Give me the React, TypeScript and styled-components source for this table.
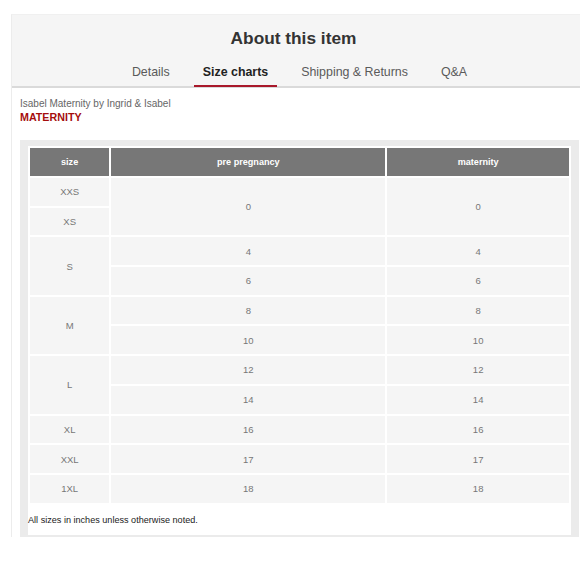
import React from 'react';
import styled, { createGlobalStyle } from 'styled-components';

const GlobalStyle = createGlobalStyle`
  html, body {
    margin: 0;
    padding: 0;
    background: #fff;
    overflow: hidden;
  }
  body {
    font-family: 'Liberation Sans', Arial, Helvetica, sans-serif;
  }
`;

const Page = styled.div`
  width: 575px;
  margin: 14px 0 0 11px;
  border-left: 1px solid #ececec;
  border-top: 1px solid #f0f0f0;
`;

const Header = styled.header`
  background: #f5f5f5;
  padding-top: 11px;
  border-bottom: 2px solid #dadada;
`;

const Title = styled.h2`
  margin: 0;
  padding-right: 12px;
  text-align: center;
  font-size: 17.3px;
  line-height: 24px;
  font-weight: bold;
  color: #333;
`;

const Tabs = styled.nav`
  display: flex;
  justify-content: center;
  gap: 15px;
  margin-top: 4px;
`;

interface TabProps {
  active?: boolean;
}

const Tab = styled.span<TabProps>`
  padding: 9px 9px 4px;
  font-size: 12.4px;
  line-height: 18px;
  font-weight: ${props => (props.active ? 'bold' : 'normal')};
  color: ${props => (props.active ? '#222' : '#5a5a5a')};
  border-bottom: 2px solid ${props => (props.active ? '#a8182a' : 'transparent')};
  margin-bottom: -1px;
`;

const Content = styled.div`
  padding: 9px 8px 0;
`;

const Brand = styled.div`
  font-size: 10px;
  line-height: 13px;
  color: #666;
`;

const Category = styled.div`
  margin-top: 1px;
  font-size: 10.7px;
  line-height: 13px;
  font-weight: bold;
  color: #a50d0d;
`;

const Panel = styled.div`
  margin-top: 16px;
  background: #ebebeb;
  padding: 6px 8px 2px;
`;

const Sheet = styled.div`
  background: #fff;
`;

const Table = styled.table`
  width: 100%;
  table-layout: fixed;
  border-collapse: separate;
  border-spacing: 2px;
`;

const HeadCell = styled.th<{ w: number }>`
  width: ${props => props.w}px;
  height: 28px;
  padding: 0;
  background: #777;
  color: #fff;
  font-size: 9.1px;
  font-weight: bold;
  text-align: center;
`;

const Cell = styled.td`
  height: 27.7px;
  padding: 0;
  background: #f5f5f5;
  color: #777;
  font-size: 9.5px;
  text-align: center;
  vertical-align: middle;
`;

const Note = styled.p`
  margin: 0;
  padding: 9px 0 9px;
  font-size: 9.1px;
  line-height: 12px;
  color: #222;
`;

interface Group {
  sizes: string[];
  values: string[];
  merged?: boolean;
}

const groups: Group[] = [
  { sizes: ['XXS', 'XS'], values: ['0'], merged: true },
  { sizes: ['S'], values: ['4', '6'] },
  { sizes: ['M'], values: ['8', '10'] },
  { sizes: ['L'], values: ['12', '14'] },
  { sizes: ['XL'], values: ['16'] },
  { sizes: ['XXL'], values: ['17'] },
  { sizes: ['1XL'], values: ['18'] },
];

function renderGroup(g: Group, gi: number) {
  if (g.merged) {
    return g.sizes.map((s, i) => (
      <tr key={`${gi}-${s}`}>
        <Cell>{s}</Cell>
        {i === 0 && (
          <>
            <Cell rowSpan={g.sizes.length}>{g.values[0]}</Cell>
            <Cell rowSpan={g.sizes.length}>{g.values[0]}</Cell>
          </>
        )}
      </tr>
    ));
  }
  return g.values.map((v, i) => (
    <tr key={`${gi}-${v}`}>
      {i === 0 && <Cell rowSpan={g.values.length}>{g.sizes[0]}</Cell>}
      <Cell>{v}</Cell>
      <Cell>{v}</Cell>
    </tr>
  ));
}

export default function App(): JSX.Element {
  return (
    <>
      <GlobalStyle />
      <Page>
        <Header>
          <Title>About this item</Title>
          <Tabs>
            <Tab>Details</Tab>
            <Tab active>Size charts</Tab>
            <Tab>Shipping &amp; Returns</Tab>
            <Tab>Q&amp;A</Tab>
          </Tabs>
        </Header>
        <Content>
          <Brand>Isabel Maternity by Ingrid &amp; Isabel</Brand>
          <Category>MATERNITY</Category>
          <Panel>
            <Sheet>
              <Table>
                <thead>
                  <tr>
                    <HeadCell w={79}>size</HeadCell>
                    <HeadCell w={273}>pre pregnancy</HeadCell>
                    <HeadCell w={181}>maternity</HeadCell>
                  </tr>
                </thead>
                <tbody>{groups.map(renderGroup)}</tbody>
              </Table>
              <Note>All sizes in inches unless otherwise noted.</Note>
            </Sheet>
          </Panel>
        </Content>
      </Page>
    </>
  );
}
